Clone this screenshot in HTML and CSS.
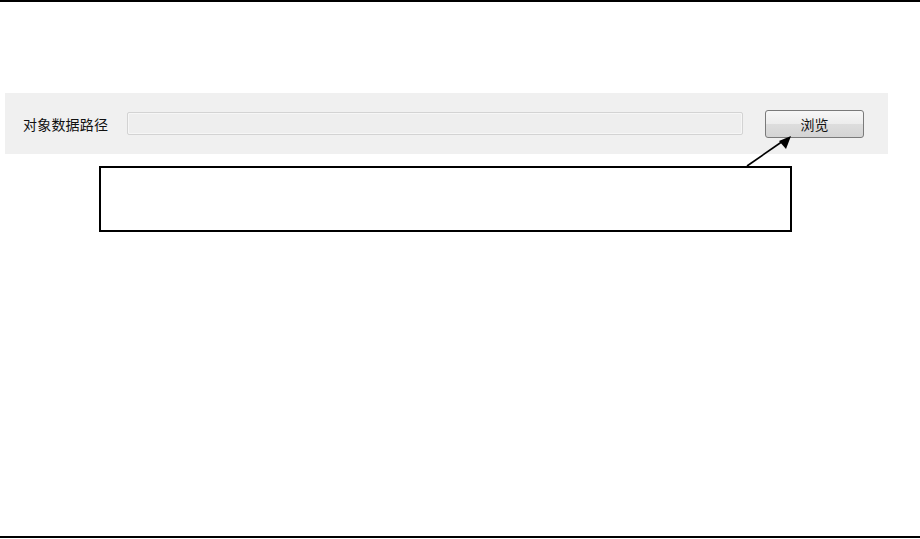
FILE: index.html
```html
<!DOCTYPE html>
<html lang="zh">
<head>
<meta charset="utf-8">
<link rel="stylesheet" href="styles.css">
</head>
<body>
<div class="page">
  <div class="rule-top"></div>
  <div class="panel">
    <span class="label">对象数据路径</span>
    <div class="path-input"></div>
    <button class="browse">浏览</button>
  </div>
  <div class="callout"></div>
  <div class="spacer"></div>
  <div class="rule-bottom"></div>
  <svg class="arrow" width="920" height="539" viewBox="0 0 920 539">
    <line x1="747" y1="166" x2="783" y2="141" stroke="#000" stroke-width="1.6"/>
    <polygon points="791,136 779,141 786,149" fill="#000"/>
  </svg>
</div>
</body>
</html>
```

FILE: styles.css
```css
* { box-sizing: border-box; }
html, body { margin: 0; padding: 0; background: #fff; }
body { font-family: "Noto Sans CJK SC", "Noto Sans", sans-serif; }
.page {
  position: relative;
  width: 920px;
  height: 539px;
  display: flex;
  flex-direction: column;
}
.rule-top { height: 2px; background: #000; flex: none; }
.panel {
  margin: 91px 0 0 5px;
  width: 883px;
  height: 61px;
  background: #f0f0f0;
  display: flex;
  align-items: center;
  padding-left: 18px;
  flex: none;
}
.label {
  font-size: 14px;
  color: #111;
  width: 104px;
  white-space: nowrap;
  letter-spacing: 0.2px;
  line-height: 1;
}
.path-input {
  width: 616px;
  height: 23px;
  border: 1px solid #d3d3d3;
  border-radius: 2px;
  background: #eeeeee;
  box-shadow: inset 0 0 0 1px #f6f6f6;
}
.browse {
  margin-left: 22px;
  width: 99px;
  height: 28px;
  border: 1px solid #7a7a7a;
  border-radius: 3px;
  background: linear-gradient(#f7f7f7 0%, #ececec 50%, #dddddd 51%, #d4d4d4 100%);
  font-family: "Noto Sans CJK SC", sans-serif;
  font-size: 14px;
  color: #111;
  padding: 0;
  line-height: 1;
}
.callout {
  margin: 12px 0 0 99px;
  width: 693px;
  height: 66px;
  border: 2px solid #000;
  flex: none;
}
.spacer { flex: 1; }
.rule-bottom { height: 2px; background: #000; margin-bottom: 1px; flex: none; }
.arrow { position: absolute; left: 0; top: 0; pointer-events: none; }
```
